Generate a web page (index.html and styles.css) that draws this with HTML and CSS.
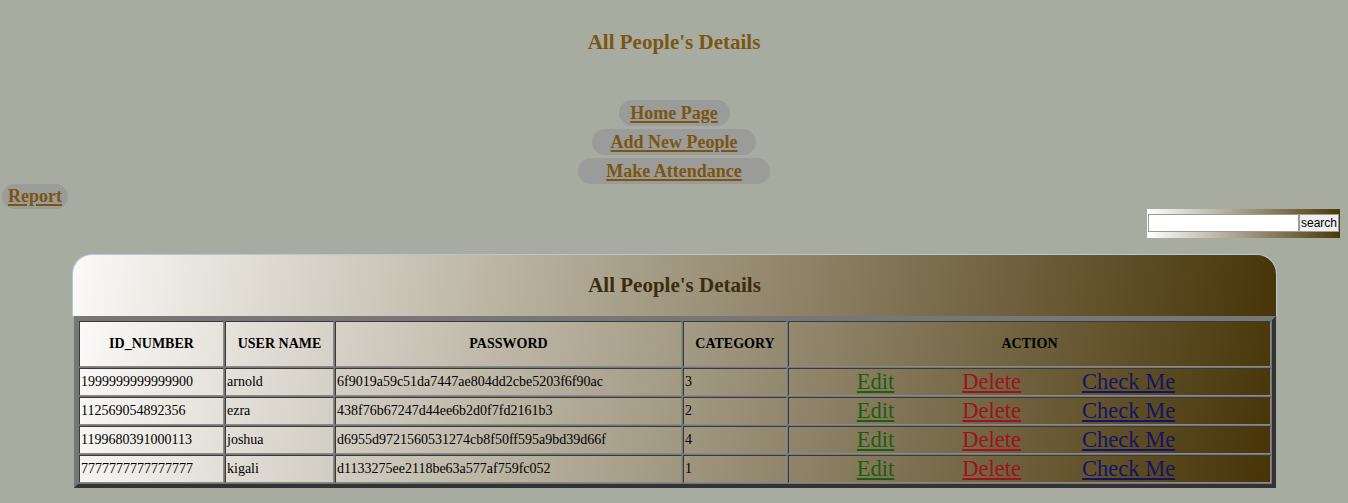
FILE: index.html
```html
<!DOCTYPE html>
<html>
<head>
<meta charset="utf-8">
<title>All People's Details</title>
<link rel="stylesheet" href="styles.css">
</head>
<body>
<h1 class="title">All People's Details</h1>
<nav class="menu">
  <a class="pill pill-home" href="#">Home Page</a>
  <a class="pill pill-add" href="#">Add New People</a>
  <a class="pill pill-make" href="#">Make Attendance</a>
  <a class="pill pill-report" href="#">Report</a>
</nav>
<div class="search-row">
  <form class="search">
    <input class="search-input" type="text"><button class="search-btn" type="button">search</button>
  </form>
</div>
<table class="people">
  <caption class="people-cap">All People's Details</caption>
  <tbody>
    <tr>
      <th class="c-id">ID_NUMBER</th>
      <th class="c-user">USER NAME</th>
      <th class="c-pass">PASSWORD</th>
      <th class="c-cat">CATEGORY</th>
      <th class="c-act">ACTION</th>
    </tr>
    <tr>
      <td>1999999999999900</td><td>arnold</td><td>6f9019a59c51da7447ae804dd2cbe5203f6f90ac</td><td>3</td>
      <td class="act"><a class="edit" href="#">Edit</a><a class="del" href="#">Delete</a><a class="chk" href="#">Check Me</a></td>
    </tr>
    <tr>
      <td>112569054892356</td><td>ezra</td><td>438f76b67247d44ee6b2d0f7fd2161b3</td><td>2</td>
      <td class="act"><a class="edit" href="#">Edit</a><a class="del" href="#">Delete</a><a class="chk" href="#">Check Me</a></td>
    </tr>
    <tr>
      <td>1199680391000113</td><td>joshua</td><td>d6955d9721560531274cb8f50ff595a9bd39d66f</td><td>4</td>
      <td class="act"><a class="edit" href="#">Edit</a><a class="del" href="#">Delete</a><a class="chk" href="#">Check Me</a></td>
    </tr>
    <tr>
      <td>7777777777777777</td><td>kigali</td><td>d1133275ee2118be63a577af759fc052</td><td>1</td>
      <td class="act"><a class="edit" href="#">Edit</a><a class="del" href="#">Delete</a><a class="chk" href="#">Check Me</a></td>
    </tr>
  </tbody>
</table>
</body>
</html>
```
FILE: styles.css
```css
html, body {
  margin: 0;
  padding: 0;
}
body {
  background: #a8aba0;
  font-family: "Liberation Serif", "Times New Roman", serif;
  color: #000;
}
.title {
  margin: 0;
  padding-top: 30px;
  font-size: 21px;
  line-height: 24px;
  font-weight: bold;
  text-align: center;
  color: #7a5614;
}
.menu {
  display: flex;
  flex-direction: column;
  align-items: center;
  gap: 3px;
  margin-top: 46px;
}
.pill {
  display: block;
  box-sizing: border-box;
  height: 26px;
  line-height: 26px;
  border-radius: 13px;
  background: #9b9b99;
  color: #7a5612;
  font-size: 18px;
  font-weight: bold;
  text-align: center;
  text-decoration: underline;
  text-decoration-thickness: 2px;
  text-underline-offset: 2px;
}
.pill-home { width: 111px; }
.pill-add { width: 164px; }
.pill-make { width: 192px; }
.pill-report {
  width: 66px;
  height: 25px;
  line-height: 25px;
  align-self: flex-start;
  margin-left: 2px;
  margin-top: -3px;
}
.search-row {
  display: flex;
  justify-content: flex-end;
  padding-right: 8px;
}
.search {
  display: flex;
  margin: 0;
  padding: 5px 1px 6px 1px;
  background: linear-gradient(to right, #ffffff, #4a3808);
}
.search-input {
  box-sizing: border-box;
  width: 151px;
  height: 18px;
  margin: 0;
  border: 1px solid #9a9a9a;
  background: #fff;
  padding: 0 2px;
}
.search-btn {
  box-sizing: border-box;
  width: 40px;
  height: 18px;
  margin: 0;
  padding: 0;
  border: 1px solid #9a9a9a;
  background: #efefef;
  font-family: "Liberation Sans", Arial, sans-serif;
  font-size: 12px;
  color: #000;
}
.people {
  box-sizing: border-box;
  width: 1202px;
  margin: 16px 0 0 calc(50% - 600px);
  table-layout: fixed;
  border-collapse: separate;
  border-spacing: 1px;
  border-style: solid;
  border-width: 4px;
  border-color: #777 #333 #333 #777;
  background: #777;
}
.people-cap {
  margin: 0 -1px 0 -2px;
  padding: 18px 0 19px 0;
  border: 1px solid #b7c7d9;
  border-bottom: none;
  border-radius: 20px 20px 0 0;
  background: linear-gradient(100deg, #fbfaf8, #473508);
  font-size: 21px;
  line-height: 24px;
  font-weight: bold;
  color: #3a2c0e;
  text-align: center;
}
.people tbody {
  background: linear-gradient(102deg, #fbfaf8 0%, #a39a84 50%, #463406 100%);
}
.people th,
.people td {
  border-style: solid;
  border-width: 1px;
  border-color: #3a3a3a #8a8a8a #8a8a8a #3a3a3a;
  font-size: 14px;
}
.people th {
  box-sizing: border-box;
  height: 46px;
  padding: 0 1px;
  font-weight: bold;
  text-align: center;
  vertical-align: middle;
}
.c-id { width: 145px; }
.c-user { width: 109px; }
.c-pass { width: 347px; }
.c-cat { width: 104px; }
.c-act { width: 483px; }
.people td {
  height: 26px;
  padding: 0 1px;
  text-align: left;
  vertical-align: middle;
  white-space: nowrap;
}
.people td.act {
  text-align: center;
  padding-right: 28px;
  font-size: 22.5px;
  line-height: 26px;
}
.act a {
  text-decoration: underline;
}
.edit {
  color: #1d5c12;
  margin-right: 68px;
}
.del {
  color: #a0101e;
  margin-right: 61px;
}
.chk {
  color: #141466;
}
```
